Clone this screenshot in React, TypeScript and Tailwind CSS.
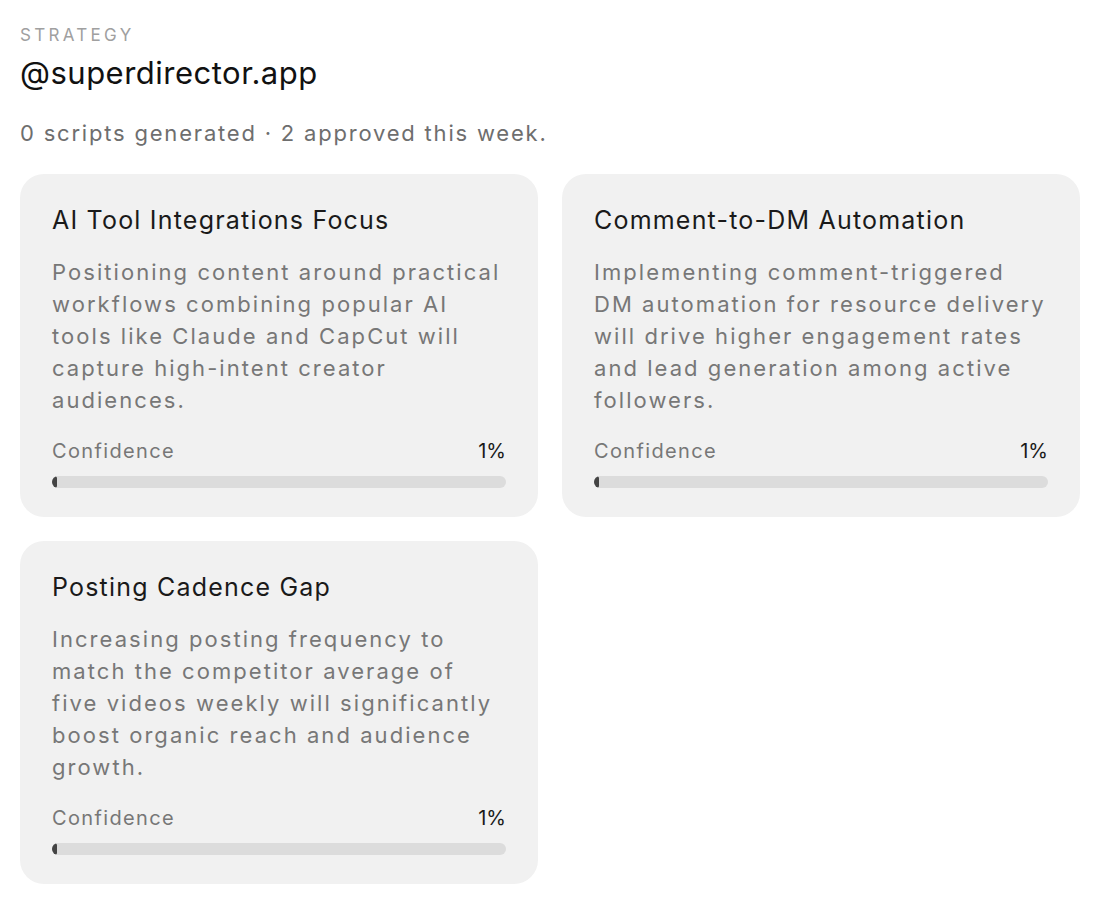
import React from "react";

const insights = [
  {
    title: "AI Tool Integrations Focus",
    body: "Positioning content around practical workflows combining popular AI tools like Claude and CapCut will capture high-intent creator audiences.",
    confidence: 1,
  },
  {
    title: "Comment-to-DM Automation",
    body: "Implementing comment-triggered DM automation for resource delivery will drive higher engagement rates and lead generation among active followers.",
    confidence: 1,
  },
  {
    title: "Posting Cadence Gap",
    body: "Increasing posting frequency to match the competitor average of five videos weekly will significantly boost organic reach and audience growth.",
    confidence: 1,
  },
];

function InsightCard({ item }: { item: any }) {
  return (
    <div className="bg-[#f1f1f1] rounded-[24px] px-8 pt-[28px] pb-[29px] flex flex-col">
      <div className="text-[25px] leading-[36px] text-[#1a1a1a] tracking-[1.2px]">{item.title}</div>
      <p className="mt-[18px] text-[22px] leading-[32px] text-[#777] tracking-[2.05px]">{item.body}</p>
      <div className="mt-[23px] flex justify-between items-center text-[20px] leading-[24px]">
        <span className="text-[#777] tracking-[1.35px]">Confidence</span>
        <span className="text-[#1a1a1a]">{item.confidence}%</span>
      </div>
      <div className="mt-[13px] h-[12px] rounded-full bg-[#dcdcdc] overflow-hidden">
        <div className="h-full rounded-full bg-[#444]" style={{ width: `${item.confidence}%` }} />
      </div>
    </div>
  );
}

export default function App() {
  return (
    <div className="min-h-screen bg-white px-5 pt-6 font-['Inter',sans-serif]">
      <div className="text-[17px] leading-[22px] tracking-[3.3px] text-[#a0a0a0]">STRATEGY</div>
      <div className="mt-[7px] text-[31px] leading-[40px] text-[#111] tracking-[0.5px]">@superdirector.app</div>
      <div className="mt-[25px] text-[22px] leading-[30px] text-[#6e6e6e] tracking-[1.8px]">
        0 scripts generated · 2 approved this week.
      </div>
      <div className="mt-[26px] grid grid-cols-2 gap-6">
        {insights.map((item, i) => (
          <InsightCard key={i} item={item} />
        ))}
      </div>
    </div>
  );
}
